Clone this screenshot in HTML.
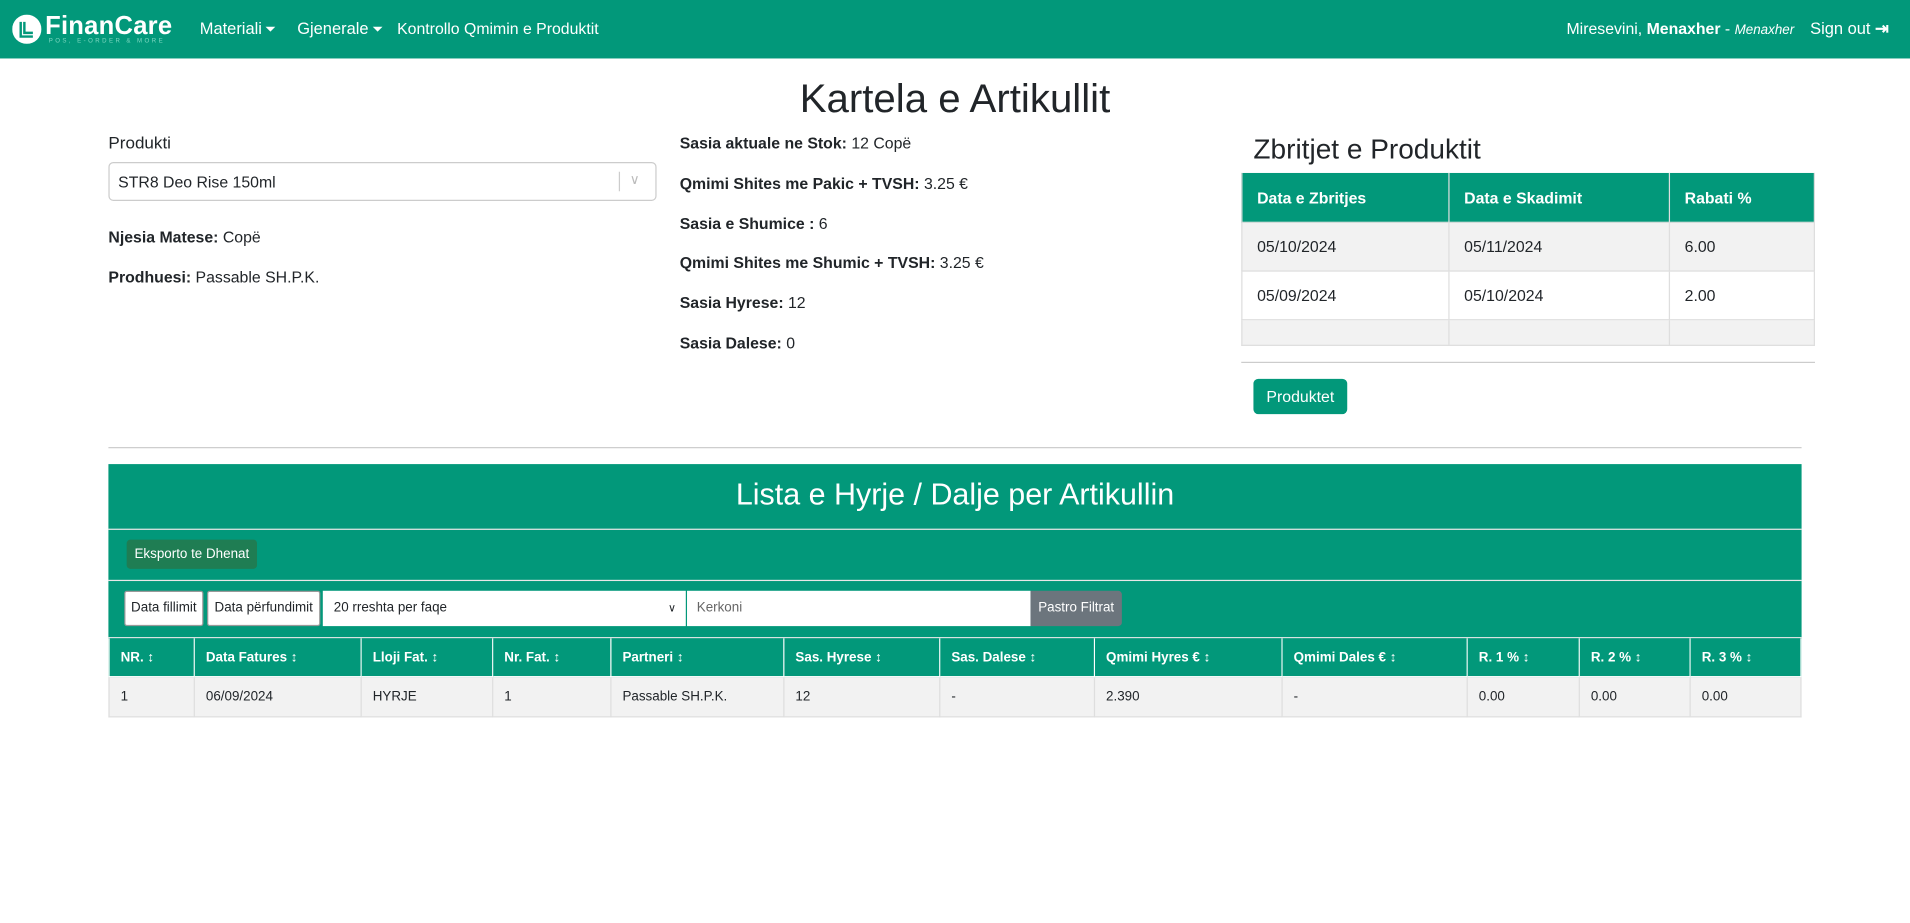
<!DOCTYPE html>
<html><head><meta charset="utf-8"><style>
html,body{margin:0;padding:0;width:1910px;height:923px;overflow:hidden;background:#fff}
#w{position:absolute;left:0;top:0;width:1568px;height:758px;transform:scale(1.21811);transform-origin:0 0;font-family:"Liberation Sans",sans-serif;color:#212529}
.a{position:absolute;white-space:nowrap}
.g{background:#02987a}
.nav{left:0;top:0;width:1568px;height:48px}
.ni{color:#fff;font-size:13.5px;top:16px}
.car{display:inline-block;border-left:4px solid transparent;border-right:4px solid transparent;border-top:4px solid #fff;vertical-align:middle;margin-left:3px}
.lb{font-size:13px}
.row{position:absolute;display:flex}
.row>div{box-sizing:border-box;border-right:1px solid #dedede;border-bottom:1px solid #dedede;padding-left:12px;display:flex;align-items:center;white-space:nowrap;overflow:hidden}
.row>div:first-child{border-left:1px solid #dedede}
.h>div{background:#02987a;color:#fff;font-weight:bold}
.r2>div{padding-left:9px;font-size:11px}
.r2.h>div{border-color:#fff}
</style></head><body><div id="w">
<div class="a g nav"></div>
<svg class="a" style="left:10px;top:12px" width="24" height="24" viewBox="0 0 24 24"><circle cx="12" cy="12" r="12" fill="#fff"/><path d="M7 6v12h10M10 6v9h7" stroke="#02987a" stroke-width="2" fill="none"/></svg>
<div class="a" style="left:37px;top:10px;color:#fff;font-size:21px;font-weight:bold;letter-spacing:0.2px">FinanCare</div>
<div class="a" style="left:40px;top:31px;color:#cfe;font-size:5px;letter-spacing:2px;opacity:.6">POS, E-ORDER &amp; MORE</div>
<div class="a ni" style="left:164px">Materiali<span class="car"></span></div>
<div class="a ni" style="left:244px">Gjenerale<span class="car"></span></div>
<div class="a ni" style="left:326px;font-size:13px">Kontrollo Qmimin e Produktit</div>
<div class="a ni" style="left:1286px;font-size:13px">Miresevini, <b>Menaxher</b> - <i style="font-size:11px">Menaxher</i></div>
<div class="a ni" style="left:1486px;font-size:13.5px">Sign out <b>⇥</b></div>

<div class="a" style="left:0;width:1568px;text-align:center;top:62px;font-size:33px">Kartela e Artikullit</div>
<div class="a" style="left:89px;top:109px;font-size:14px">Produkti</div>
<div class="a" style="left:89px;top:133px;width:448px;height:30px;border:1px solid #ccc;border-radius:4px"></div>
<div class="a" style="left:97px;top:142px;font-size:13px">STR8 Deo Rise 150ml</div>
<div class="a" style="left:508px;top:141px;width:1px;height:16px;background:#ccc"></div>
<div class="a" style="left:517px;top:141px;font-size:11px;color:#bbb">∨</div>
<div class="a lb" style="left:89px;top:187px"><b>Njesia Matese:</b> Copë</div>
<div class="a lb" style="left:89px;top:220px"><b>Prodhuesi:</b> Passable SH.P.K.</div>
<div class="a lb" style="left:558px;top:110px"><b>Sasia aktuale ne Stok:</b> 12 Copë</div>
<div class="a lb" style="left:558px;top:143px"><b>Qmimi Shites me Pakic + TVSH:</b> 3.25 €</div>
<div class="a lb" style="left:558px;top:176px"><b>Sasia e Shumice :</b> 6</div>
<div class="a lb" style="left:558px;top:208px"><b>Qmimi Shites me Shumic + TVSH:</b> 3.25 €</div>
<div class="a lb" style="left:558px;top:241px"><b>Sasia Hyrese:</b> 12</div>
<div class="a lb" style="left:558px;top:274px"><b>Sasia Dalese:</b> 0</div>

<div class="a" style="left:1029px;top:109px;font-size:23px">Zbritjet e Produktit</div>
<div class="a" style="left:1019px;top:142px;width:471px;height:1px;background:#dedede"></div>
<div class="row h" style="left:1019px;top:142px;height:41px;font-size:13px"><div style="width:171px">Data e Zbritjes</div><div style="width:181px">Data e Skadimit</div><div style="width:119px">Rabati %</div></div>
<div class="row" style="left:1019px;top:183px;height:40px;font-size:13px;background:#f2f2f2"><div style="width:171px">05/10/2024</div><div style="width:181px">05/11/2024</div><div style="width:119px">6.00</div></div>
<div class="row" style="left:1019px;top:223px;height:40px;font-size:13px"><div style="width:171px">05/09/2024</div><div style="width:181px">05/10/2024</div><div style="width:119px">2.00</div></div>
<div class="row" style="left:1019px;top:263px;height:21px;background:#f2f2f2"><div style="width:171px"></div><div style="width:181px"></div><div style="width:119px"></div></div>
<div class="a" style="left:1019px;top:297px;width:471px;height:1px;background:#ccc"></div>
<div class="a g" style="left:1029px;top:311px;width:77px;height:29px;border-radius:4px;color:#fff;font-size:13px;text-align:center;line-height:29px">Produktet</div>
<div class="a" style="left:89px;top:367px;width:1390px;height:1px;background:#ccc"></div>

<div class="a g" style="left:89px;top:381px;width:1390px;height:174px"></div>
<div class="a" style="left:89px;width:1390px;text-align:center;top:392px;font-size:25px;color:#fff">Lista e Hyrje / Dalje per Artikullin</div>
<div class="a" style="left:89px;top:434px;width:1390px;height:1px;background:#e8e8e8"></div>
<div class="a" style="left:104px;top:443px;width:107px;height:24px;border-radius:3px;background:#1f7d53;color:#fff;font-size:11px;text-align:center;line-height:24px">Eksporto te Dhenat</div>
<div class="a" style="left:89px;top:476px;width:1390px;height:1px;background:#e8e8e8"></div>
<div class="a" style="left:102px;top:485px;width:65px;height:29px;background:#fff;border:1px solid #999;border-radius:2px;font-size:11px;line-height:27px;text-align:center;box-sizing:border-box">Data fillimit</div>
<div class="a" style="left:170px;top:485px;width:93px;height:29px;background:#fff;border:1px solid #999;border-radius:2px;font-size:11px;line-height:27px;text-align:center;box-sizing:border-box">Data përfundimit</div>
<div class="a" style="left:265px;top:485px;width:298px;height:29px;background:#fff;font-size:11px;line-height:29px;box-sizing:border-box;padding-left:9px">20 rreshta per faqe<span style="position:absolute;right:8px;font-size:9px">∨</span></div>
<div class="a" style="left:564px;top:485px;width:282px;height:29px;background:#fff;font-size:11px;line-height:29px;box-sizing:border-box;padding-left:8px;color:#666">Kerkoni</div>
<div class="a" style="left:846px;top:485px;width:75px;height:29px;background:#6c757d;border-radius:0 3px 3px 0;font-size:11px;line-height:29px;text-align:center;color:#fff">Pastro Filtrat</div>
<div class="a" style="left:89px;top:523px;width:1390px;height:1px;background:#e8e8e8"></div>
<div class="row r2 h" style="left:89px;top:524px;height:32px"><div style="width:71px">NR. ↕</div><div style="width:137px">Data Fatures ↕</div><div style="width:108px">Lloji Fat. ↕</div><div style="width:97px">Nr. Fat. ↕</div><div style="width:142px">Partneri ↕</div><div style="width:128px">Sas. Hyrese ↕</div><div style="width:127px">Sas. Dalese ↕</div><div style="width:154px">Qmimi Hyres € ↕</div><div style="width:152px">Qmimi Dales € ↕</div><div style="width:92px">R. 1 % ↕</div><div style="width:91px">R. 2 % ↕</div><div style="width:91px">R. 3 % ↕</div></div>
<div class="row r2" style="left:89px;top:556px;height:33px;background:#f2f2f2"><div style="width:71px">1</div><div style="width:137px">06/09/2024</div><div style="width:108px">HYRJE</div><div style="width:97px">1</div><div style="width:142px">Passable SH.P.K.</div><div style="width:128px">12</div><div style="width:127px">-</div><div style="width:154px">2.390</div><div style="width:152px">-</div><div style="width:92px">0.00</div><div style="width:91px">0.00</div><div style="width:91px">0.00</div></div>
</div></body></html>
